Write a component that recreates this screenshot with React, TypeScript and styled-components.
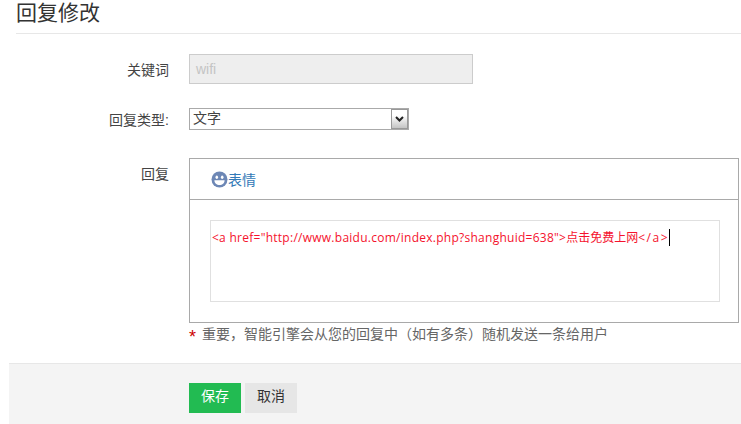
import { createGlobalStyle } from "styled-components";
import styled from "styled-components";

const cjk = `"Liberation Sans", "Noto Sans CJK SC", sans-serif`;

const GlobalStyle = createGlobalStyle`
  html, body {
    margin: 0;
    padding: 0;
    background: #fff;
    overflow: hidden;
  }
  body {
    font-family: ${cjk};
    font-size: 14px;
    color: #444;
  }
`;

const Page = styled.div`
  width: 741px;
  height: 424px;
  overflow: hidden;
`;

const Title = styled.h2`
  margin: 0 0 0 16px;
  height: 33px;
  box-sizing: content-box;
  border-bottom: 1px solid #e7e7e7;
  font-size: 21px;
  font-weight: 400;
  line-height: 26px;
  color: #333;
`;

const Form = styled.div`
  padding-top: 20px;
`;

const Row = styled.div<{ $bottom: number }>`
  display: flex;
  align-items: flex-start;
  margin-bottom: ${(p) => p.$bottom}px;
`;

const Label = styled.label<{ $height: number }>`
  width: 169px;
  height: ${(p) => p.$height}px;
  margin-right: 20px;
  flex: none;
  text-align: right;
  font-size: 14px;
  line-height: ${(p) => p.$height + 2}px;
  color: #444;
`;

const KeywordInput = styled.div`
  box-sizing: border-box;
  width: 284px;
  height: 30px;
  padding-left: 6px;
  border: 1px solid #ccc;
  background: #eee;
  font-size: 14px;
  line-height: 28px;
  color: #c4c4c4;
`;

const SelectBox = styled.div`
  box-sizing: border-box;
  display: flex;
  justify-content: space-between;
  width: 220px;
  height: 22px;
  border: 1px solid #aaa;
  background: #fff;
`;

const SelectText = styled.span`
  padding-left: 3px;
  font-size: 14px;
  line-height: 18px;
  color: #444;
`;

const SelectArrow = styled.span`
  box-sizing: border-box;
  display: flex;
  align-items: center;
  justify-content: center;
  width: 17px;
  height: 20px;
  border: 1px solid #999;
  background: linear-gradient(#fff 30%, #c4c4c4);
`;

const Editor = styled.div`
  box-sizing: border-box;
  width: 550px;
  height: 165px;
  border: 1px solid #a9a9a9;
`;

const Toolbar = styled.div`
  box-sizing: border-box;
  display: flex;
  align-items: center;
  height: 41px;
  padding-left: 21px;
  border-bottom: 1px solid #a9a9a9;
`;

const EmojiLink = styled.a`
  font-size: 14px;
  color: #337ab7;
`;

const EditorBody = styled.div`
  padding: 20px;
`;

const TextArea = styled.div`
  box-sizing: border-box;
  width: 510px;
  height: 82px;
  padding: 8px 1px;
  border: 1px solid #e0e0e0;
  font-family: "Open Sans", "Noto Sans CJK SC", sans-serif;
  font-size: 12px;
  line-height: 17px;
  letter-spacing: 0.26px;
  color: #f5122d;
  white-space: nowrap;
`;

const Chinese = styled.span`
  letter-spacing: 0;
`;

const ClosingTag = styled.span`
  letter-spacing: 1.5px;
`;

const Caret = styled.span`
  display: inline-block;
  width: 1px;
  height: 17px;
  background: #000;
  vertical-align: top;
`;

const Hint = styled.p`
  display: flex;
  align-items: center;
  margin: 3px 0 0 189px;
  font-size: 14px;
  line-height: 17px;
  color: #666;
`;

const Star = styled.span`
  width: 13px;
  height: 17px;
  padding-top: 3px;
  font-size: 18px;
  box-sizing: border-box;
  color: #c00;
`;

const Footer = styled.div`
  box-sizing: border-box;
  display: flex;
  gap: 4px;
  height: 61px;
  margin: 20px 0 0 9px;
  padding: 19px 0 0 180px;
  border-top: 1px solid #e7e7e7;
  background: #f4f4f4;
`;

const Button = styled.button<{ $primary?: boolean }>`
  width: 52px;
  height: 30px;
  padding: 0 0 6px;
  border: 0;
  font-family: ${cjk};
  font-size: 14px;
  background: ${(p) => (p.$primary ? "#22bb52" : "#e6e6e6")};
  color: ${(p) => (p.$primary ? "#fff" : "#333")};
`;

function SmileIcon() {
  return (
    <svg width="17" height="17" viewBox="0 0 17 17">
      <circle cx="8.5" cy="8.5" r="8" fill="#6d87b5" />
      <ellipse cx="5.8" cy="6.2" rx="1.3" ry="1.7" fill="#fff" />
      <ellipse cx="11.2" cy="6.2" rx="1.3" ry="1.7" fill="#fff" />
      <path d="M3.4 9.2h10.2c0 3-2.2 4.8-5.1 4.8s-5.1-1.8-5.1-4.8z" fill="#fff" />
    </svg>
  );
}

export default function App() {
  return (
    <Page>
      <GlobalStyle />
      <Title>回复修改</Title>
      <Form>
        <Row $bottom={24}>
          <Label $height={30}>关键词</Label>
          <KeywordInput>wifi</KeywordInput>
        </Row>
        <Row $bottom={28}>
          <Label $height={22}>回复类型:</Label>
          <SelectBox>
            <SelectText>文字</SelectText>
            <SelectArrow>
              <svg width="9" height="6" viewBox="0 0 9 6">
                <path d="M1 1l3.5 3.5L8 1" fill="none" stroke="#222" strokeWidth="2" />
              </svg>
            </SelectArrow>
          </SelectBox>
        </Row>
        <Row $bottom={0}>
          <Label $height={30}>回复</Label>
          <Editor>
            <Toolbar>
              <SmileIcon />
              <EmojiLink>表情</EmojiLink>
            </Toolbar>
            <EditorBody>
              <TextArea>
                {'<a href="http://www.baidu.com/index.php?shanghuid=638">'}
                <Chinese>点击免费上网</Chinese>
                <ClosingTag>{"</a>"}</ClosingTag>
                <Caret />
              </TextArea>
            </EditorBody>
          </Editor>
        </Row>
        <Hint>
          <Star>*</Star>重要，智能引擎会从您的回复中（如有多条）随机发送一条给用户
        </Hint>
      </Form>
      <Footer>
        <Button $primary>保存</Button>
        <Button>取消</Button>
      </Footer>
    </Page>
  );
}
